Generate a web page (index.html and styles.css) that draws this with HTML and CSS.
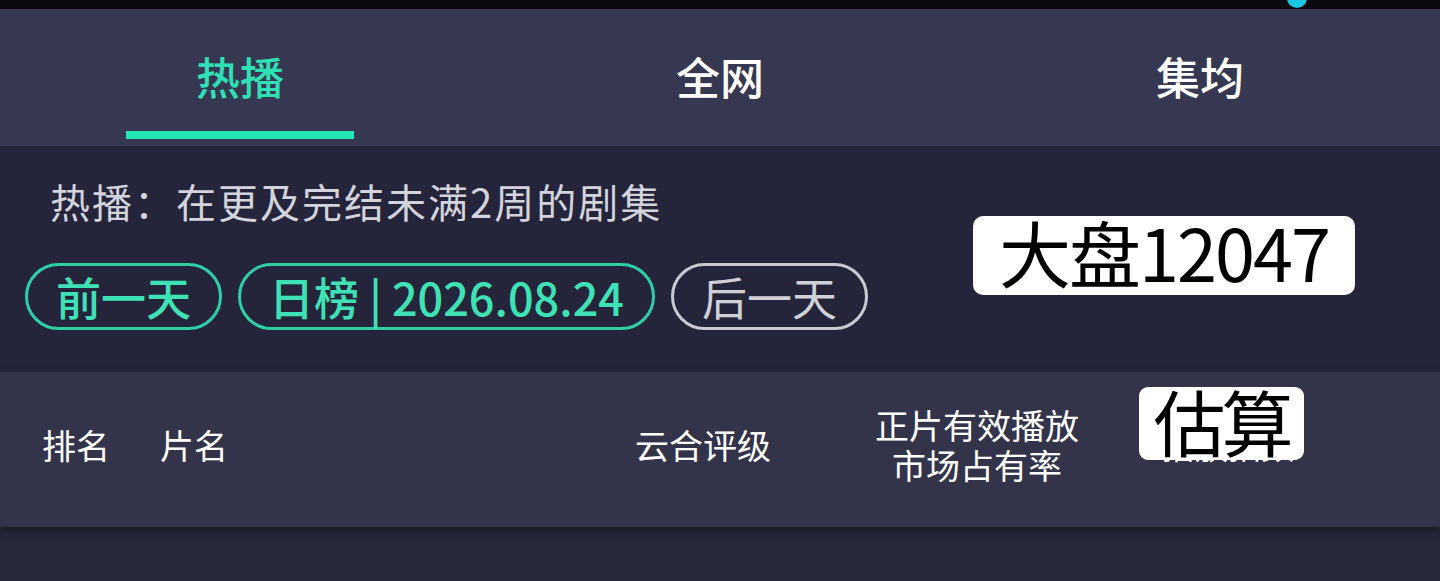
FILE: index.html
```html
<!DOCTYPE html>
<html lang="zh-CN">
<head>
  <meta charset="UTF-8" />
  <meta name="viewport" content="width=device-width, initial-scale=1.0" />
  <title>热播榜</title>
  <link rel="stylesheet" href="styles.css">
</head>
<body>
  <div class="status-bar">
    <span class="status-dot"></span>
  </div>

  <nav class="tabs">
    <div class="tab active">
      <span class="tab-label">热播</span>
      <span class="tab-line"></span>
    </div>
    <div class="tab">
      <span class="tab-label">全网</span>
      <span class="tab-line"></span>
    </div>
    <div class="tab">
      <span class="tab-label">集均</span>
      <span class="tab-line"></span>
    </div>
  </nav>

  <section class="filter">
    <p class="filter-desc">热播：在更及完结未满2周的剧集</p>
    <div class="pills">
      <button class="pill">前一天</button>
      <button class="pill">日榜 | 2026.08.24</button>
      <button class="pill muted">后一天</button>
    </div>
    <div class="market-badge">大盘12047</div>
  </section>

  <div class="table-head">
    <div class="col">排名</div>
    <div class="col">片名</div>
    <div class="col">云合评级</div>
    <div class="col center">正片有效播放<br>市场占有率</div>
    <div class="col center hidden-col">播放指数</div>
    <div class="estimate-badge">估算</div>
  </div>

  <div class="table-body"></div>
</body>
</html>
```

FILE: styles.css
```css
* {
  box-sizing: border-box;
}

body {
  margin: 0;
  height: 581px;
  overflow: hidden;
  background-color: #272a3b;
  font-family: "Noto Sans CJK SC", "Noto Sans", sans-serif;
}

.status-bar {
  position: relative;
  height: 9px;
  background-color: #0b0b0f;
}

.status-dot {
  position: absolute;
  left: 1287px;
  top: -12px;
  width: 20px;
  height: 20px;
  border-radius: 50%;
  background-color: #19c6e0;
}

.tabs {
  display: grid;
  grid-template-columns: repeat(3, 1fr);
  height: 137px;
  background-color: #363750;
}

.tab {
  display: flex;
  flex-direction: column;
  align-items: center;
  padding-top: 41px;
}

.tab-label {
  font-size: 44px;
  line-height: 53px;
  font-weight: 500;
  color: #ffffff;
}

.tab-line {
  width: 228px;
  height: 8px;
  margin-top: 28px;
}

.tab.active .tab-label {
  color: #2fe0b6;
}

.tab.active .tab-line {
  background-color: #22e6b8;
}

.filter {
  position: relative;
  height: 226px;
  padding: 31px 0 0 25px;
  background-color: #24253a;
}

.filter-desc {
  margin: 0 0 38px 25px;
  font-size: 40px;
  line-height: 48px;
  letter-spacing: 2px;
  color: #d3d3dd;
}

.pills {
  display: flex;
  gap: 16px;
}

.pill {
  height: 67px;
  padding: 0 28px;
  border: 3px solid #2ecfa8;
  border-radius: 34px;
  background: transparent;
  font-family: inherit;
  font-size: 45px;
  font-weight: 500;
  line-height: 59px;
  color: #3fe2b6;
}

.pill.muted {
  border-color: #c9c9d1;
  color: #d0d0d8;
  font-weight: normal;
}

.market-badge {
  position: absolute;
  left: 973px;
  top: 70px;
  width: 382px;
  height: 79px;
  border-radius: 10px;
  background-color: #ffffff;
  color: #000000;
  font-size: 72px;
  line-height: 70px;
  letter-spacing: -2px;
  text-align: center;
}

.table-head {
  position: relative;
  display: grid;
  grid-template-columns: 118px 475px 200px 284px 218px;
  align-items: center;
  height: 155px;
  padding: 0 0 9px 42px;
  background-color: #33344a;
  box-shadow: 0 4px 8px rgba(10, 12, 20, 0.5);
  color: #ffffff;
  font-size: 34px;
  line-height: 40px;
}

.table-head .center {
  text-align: center;
}

.hidden-col {
  font-size: 33px;
}

.estimate-badge {
  position: absolute;
  left: 1139px;
  top: 15px;
  width: 165px;
  height: 73px;
  border-radius: 9px;
  background-color: #ffffff;
  color: #000000;
  font-size: 72px;
  line-height: 66px;
  letter-spacing: -4px;
  text-align: center;
}

.table-body {
  height: 54px;
  background-color: #272a3b;
}
```
